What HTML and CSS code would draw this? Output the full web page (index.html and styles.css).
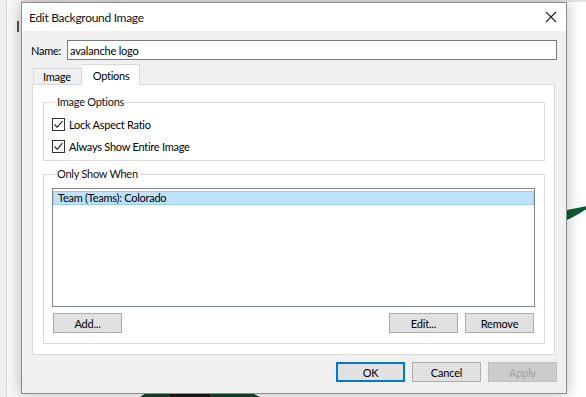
FILE: index.html
```html
<!DOCTYPE html>
<html lang="en">
<head>
<meta charset="UTF-8">
<title>Edit Background Image</title>
<link rel="stylesheet" href="styles.css">
</head>
<body>
<div class="desk">
    <div class="app-strip"><span class="app-mark"></span></div>
    <svg class="logo-bit right-bit" width="20" height="16" viewBox="0 0 20 16"><polygon points="0,4 20,0 20,3 8,10 0,14" fill="#0f5a38"/></svg>
    <svg class="logo-bit bottom-bit" width="120" height="5" viewBox="0 0 120 5"><path d="M0 5 L6 1 L40 0 L48 2 L60 0 L110 0 L120 5 Z" fill="#14432f"/><rect x="30" y="1" width="40" height="4" fill="#1a1a1a"/></svg>

    <div class="dialog">
        <div class="titlebar">
            <span class="title">Edit Background Image</span>
            <svg class="close" width="12" height="12" viewBox="0 0 12 12"><path d="M1 1 L11 11 M11 1 L1 11" stroke="#222" stroke-width="1.1" fill="none"/></svg>
        </div>
        <div class="body">
            <div class="name-row">
                <label for="imgName">Name:</label>
                <input type="text" id="imgName" value="avalanche logo">
            </div>
            <div class="tabs">
                <div class="tab">Image</div>
                <div class="tab active">Options</div>
            </div>
            <div class="panel">
                <fieldset class="group group-options">
                    <legend>Image Options</legend>
                    <label class="check">
                        <span class="box"><svg width="11" height="11" viewBox="0 0 11 11"><path d="M1.5 5.5 L4.2 8.2 L9.5 2.2" stroke="#222" stroke-width="1.1" fill="none"/></svg></span>
                        Lock Aspect Ratio
                    </label>
                    <label class="check">
                        <span class="box"><svg width="11" height="11" viewBox="0 0 11 11"><path d="M1.5 5.5 L4.2 8.2 L9.5 2.2" stroke="#222" stroke-width="1.1" fill="none"/></svg></span>
                        Always Show Entire Image
                    </label>
                </fieldset>
                <fieldset class="group group-when">
                    <legend>Only Show When</legend>
                    <div class="list">
                        <div class="item selected">Team (Teams): Colorado</div>
                    </div>
                    <div class="list-buttons">
                        <button class="btn">Add...</button>
                        <span class="spacer"></span>
                        <button class="btn">Edit...</button>
                        <button class="btn">Remove</button>
                    </div>
                </fieldset>
            </div>
            <div class="footer">
                <button class="btn default">OK</button>
                <button class="btn">Cancel</button>
                <button class="btn" disabled>Apply</button>
            </div>
        </div>
    </div>
</div>
</body>
</html>
```

FILE: styles.css
```css
body {
    margin: 0;
    padding: 0;
    font-family: Lato, "Open Sans", sans-serif;
    font-size: 11px;
    letter-spacing: -0.25px;
    color: #000;
    background-color: #fff;
}

.desk {
    position: relative;
    width: 586px;
    height: 397px;
    overflow: hidden;
    background: linear-gradient(to bottom, #e4e4e4 0, #e4e4e4 2px, #fff 2px);
}

.app-strip {
    position: absolute;
    left: 0;
    top: 0;
    width: 21px;
    height: 397px;
    background: linear-gradient(to right, #efefef 0, #efefef 6px, #d8d8d8 6px, #d8d8d8 7px, #f8f8f8 7px);
}

.app-mark {
    position: absolute;
    left: 17px;
    top: 21px;
    width: 2px;
    height: 11px;
    background-color: #555;
}

.logo-bit {
    position: absolute;
}

.right-bit {
    left: 567px;
    top: 206px;
}

.bottom-bit {
    left: 140px;
    top: 392px;
}

.dialog {
    position: absolute;
    left: 21px;
    top: 2px;
    width: 544px;
    height: 390px;
    border: 1px solid #8c8c8c;
    background-color: #f0f0f0;
    box-shadow: 0 0 14px rgba(0, 0, 0, 0.28);
    display: flex;
    flex-direction: column;
}

.titlebar {
    height: 28px;
    background-color: #fff;
    display: flex;
    align-items: center;
    padding: 0 8px 0 7px;
}

.title {
    flex: 1;
    font-size: 12px;
    letter-spacing: -0.3px;
    color: #111;
}

.close {
    margin-right: 1px;
}

.body {
    flex: 1;
    padding: 9px 9px 11px 10px;
    display: flex;
    flex-direction: column;
}

.name-row {
    display: flex;
    align-items: center;
    height: 20px;
}

.name-row label {
    margin-left: -1px;
    margin-right: 6px;
    white-space: nowrap;
}

.name-row input {
    flex: 1;
    height: 20px;
    box-sizing: border-box;
    border: 1px solid #7a7a7a;
    padding: 0 2px;
    font-family: inherit;
    font-size: 11px;
    letter-spacing: -0.2px;
    color: #000;
    background-color: #fff;
    outline: none;
}

.tabs {
    display: flex;
    align-items: flex-end;
    margin-top: 4px;
    margin-left: 1px;
    height: 20px;
    position: relative;
    z-index: 1;
}

.tab {
    height: 16px;
    box-sizing: border-box;
    padding: 0 10px 0 9px;
    border: 1px solid #d9d9d9;
    border-bottom: none;
    background-color: #f0f0f0;
    display: flex;
    align-items: center;
    font-size: 11px;
}

.tab.active {
    height: 21px;
    margin-bottom: -1px;
    background-color: #fff;
    padding: 0 10px 0 11px;
    border-left: none;
}

.panel {
    height: 271px;
    box-sizing: border-box;
    margin-right: 2px;
    border: 1px solid #d9d9d9;
    background-color: #fff;
    padding: 10px 9px 10px 10px;
    display: flex;
    flex-direction: column;
}

.group {
    margin: 0;
    border: 1px solid #dcdcdc;
    padding: 0 9px 0 8px;
    min-width: 0;
}

.group legend {
    padding: 0 2px;
    margin-left: 3px;
    line-height: 14px;
    color: #111;
}

.group-options {
    padding-top: 4px;
    padding-bottom: 3px;
}

.check {
    display: flex;
    align-items: center;
    height: 22px;
}

.box {
    width: 11px;
    height: 11px;
    border: 1px solid #333;
    background-color: #fff;
    margin-right: 4px;
    display: flex;
}

.group-when {
    margin-top: 6px;
    flex: 1;
    padding-top: 7px;
    padding-bottom: 9px;
    display: flex;
    flex-direction: column;
}

.list {
    height: 119px;
    box-sizing: border-box;
    border: 1px solid #828790;
    background-color: #fff;
    padding-top: 2px;
}

.item {
    height: 14px;
    box-sizing: border-box;
    line-height: 12px;
    padding-left: 5px;
}

.item.selected {
    background-color: #bfe2fc;
    border: 1px solid #99ccf5;
    padding-left: 4px;
}

.list-buttons {
    display: flex;
    gap: 7px;
    margin-top: 6px;
    padding: 0 1px;
}

.spacer {
    flex: 1;
}

.btn {
    width: 69px;
    height: 20px;
    box-sizing: border-box;
    border: 1px solid #adadad;
    background-color: #e1e1e1;
    font-family: inherit;
    font-size: 11px;
    letter-spacing: -0.2px;
    color: #000;
    padding: 0;
}

.btn.default {
    border-color: #0078d7;
    box-shadow: inset 0 0 0 1px #0078d7;
}

.btn:disabled {
    background-color: #cccccc;
    border-color: #bfbfbf;
    color: #a0a0a0;
}

.footer {
    margin-top: 7px;
    display: flex;
    justify-content: flex-end;
    gap: 7px;
}
```
